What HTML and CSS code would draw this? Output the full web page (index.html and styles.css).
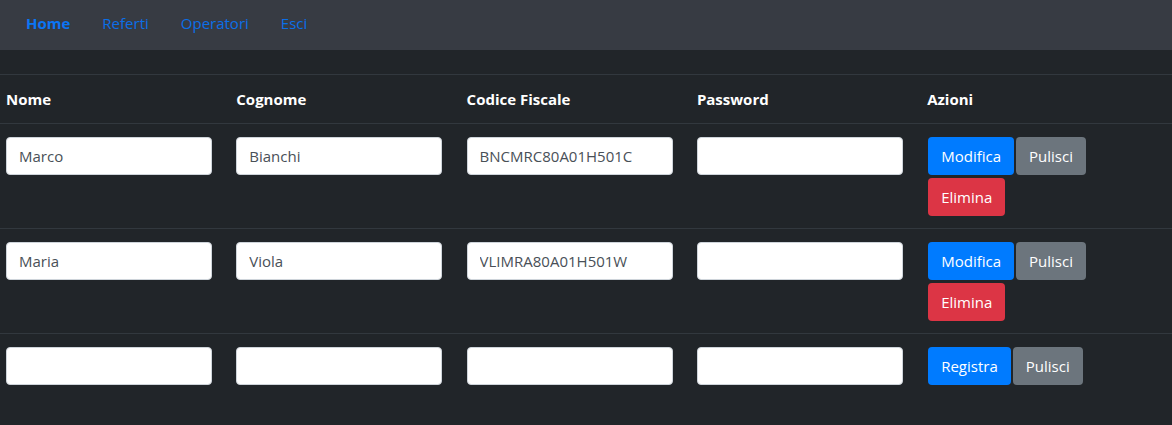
FILE: index.html
```html
<!DOCTYPE html>
<html lang="it">
<head>
<meta charset="utf-8">
<title>Operatori</title>
<link rel="stylesheet" href="styles.css">
</head>
<body>
<nav class="navbar">
  <a class="nav-link active" href="#">Home</a>
  <a class="nav-link" href="#">Referti</a>
  <a class="nav-link" href="#">Operatori</a>
  <a class="nav-link" href="#">Esci</a>
</nav>
<main class="content">
  <table class="grid">
    <thead>
      <tr>
        <th class="col">Nome</th>
        <th class="col">Cognome</th>
        <th class="col">Codice Fiscale</th>
        <th class="col">Password</th>
        <th>Azioni</th>
      </tr>
    </thead>
    <tbody>
      <tr>
        <td><input class="field" type="text" value="Marco"></td>
        <td><input class="field" type="text" value="Bianchi"></td>
        <td><input class="field" type="text" value="BNCMRC80A01H501C"></td>
        <td><input class="field" type="password" value=""></td>
        <td><div class="actions"><button class="btn primary">Modifica</button><button class="btn secondary">Pulisci</button><button class="btn danger">Elimina</button></div></td>
      </tr>
      <tr>
        <td><input class="field" type="text" value="Maria"></td>
        <td><input class="field" type="text" value="Viola"></td>
        <td><input class="field" type="text" value="VLIMRA80A01H501W"></td>
        <td><input class="field" type="password" value=""></td>
        <td><div class="actions"><button class="btn primary">Modifica</button><button class="btn secondary">Pulisci</button><button class="btn danger">Elimina</button></div></td>
      </tr>
      <tr>
        <td><input class="field" type="text" value=""></td>
        <td><input class="field" type="text" value=""></td>
        <td><input class="field" type="text" value=""></td>
        <td><input class="field" type="password" value=""></td>
        <td><div class="actions"><button class="btn primary">Registra</button><button class="btn secondary">Pulisci</button></div></td>
      </tr>
    </tbody>
  </table>
</main>
</body>
</html>
```

FILE: styles.css
```css
* { box-sizing: border-box; }
html, body {
  margin: 0;
  background: #212529;
  font-family: "Open Sans", "Noto Sans", sans-serif;
  font-size: 16px;
  color: #fff;
}
.navbar {
  height: 50px;
  background: #373b43;
  display: flex;
  align-items: center;
  padding: 0 10px;
}
.nav-link {
  color: #0b6fe8;
  text-decoration: none;
  padding: 0 16px 4px;
  font-size: 15px;
}
.nav-link.active { font-weight: 700; color: #0a75f5; }
.content { padding-top: 24px; }
.grid {
  width: 100%;
  border-collapse: collapse;
  table-layout: fixed;
}
.grid th, .grid td {
  border-top: 1px solid #32383e;
  text-align: left;
  vertical-align: top;
}
.grid th {
  font-weight: 700;
  font-size: 15px;
  line-height: 24px;
  padding: 12px 6px;
}
.grid .col { width: 230.3px; }
.grid td { padding: 13px 6px 12px; }
.field {
  display: block;
  width: 206px;
  height: 38px;
  border: 1px solid #ced4da;
  border-radius: 4px;
  background: #fff;
  padding: 6px 12px;
  font-family: inherit;
  font-size: 15px;
  color: #495057;
}
.actions {
  display: flex;
  flex-wrap: wrap;
  gap: 3px 2px;
  width: 170px;
  margin-left: 1px;
}
.btn {
  height: 38px;
  border: 1px solid transparent;
  border-radius: 4px;
  padding: 6px 12px;
  font-family: inherit;
  font-size: 15px;
  color: #fff;
  line-height: 24px;
}
.primary { background: #007bff; }
.secondary { background: #6c757d; }
.danger { background: #dc3545; }
```
